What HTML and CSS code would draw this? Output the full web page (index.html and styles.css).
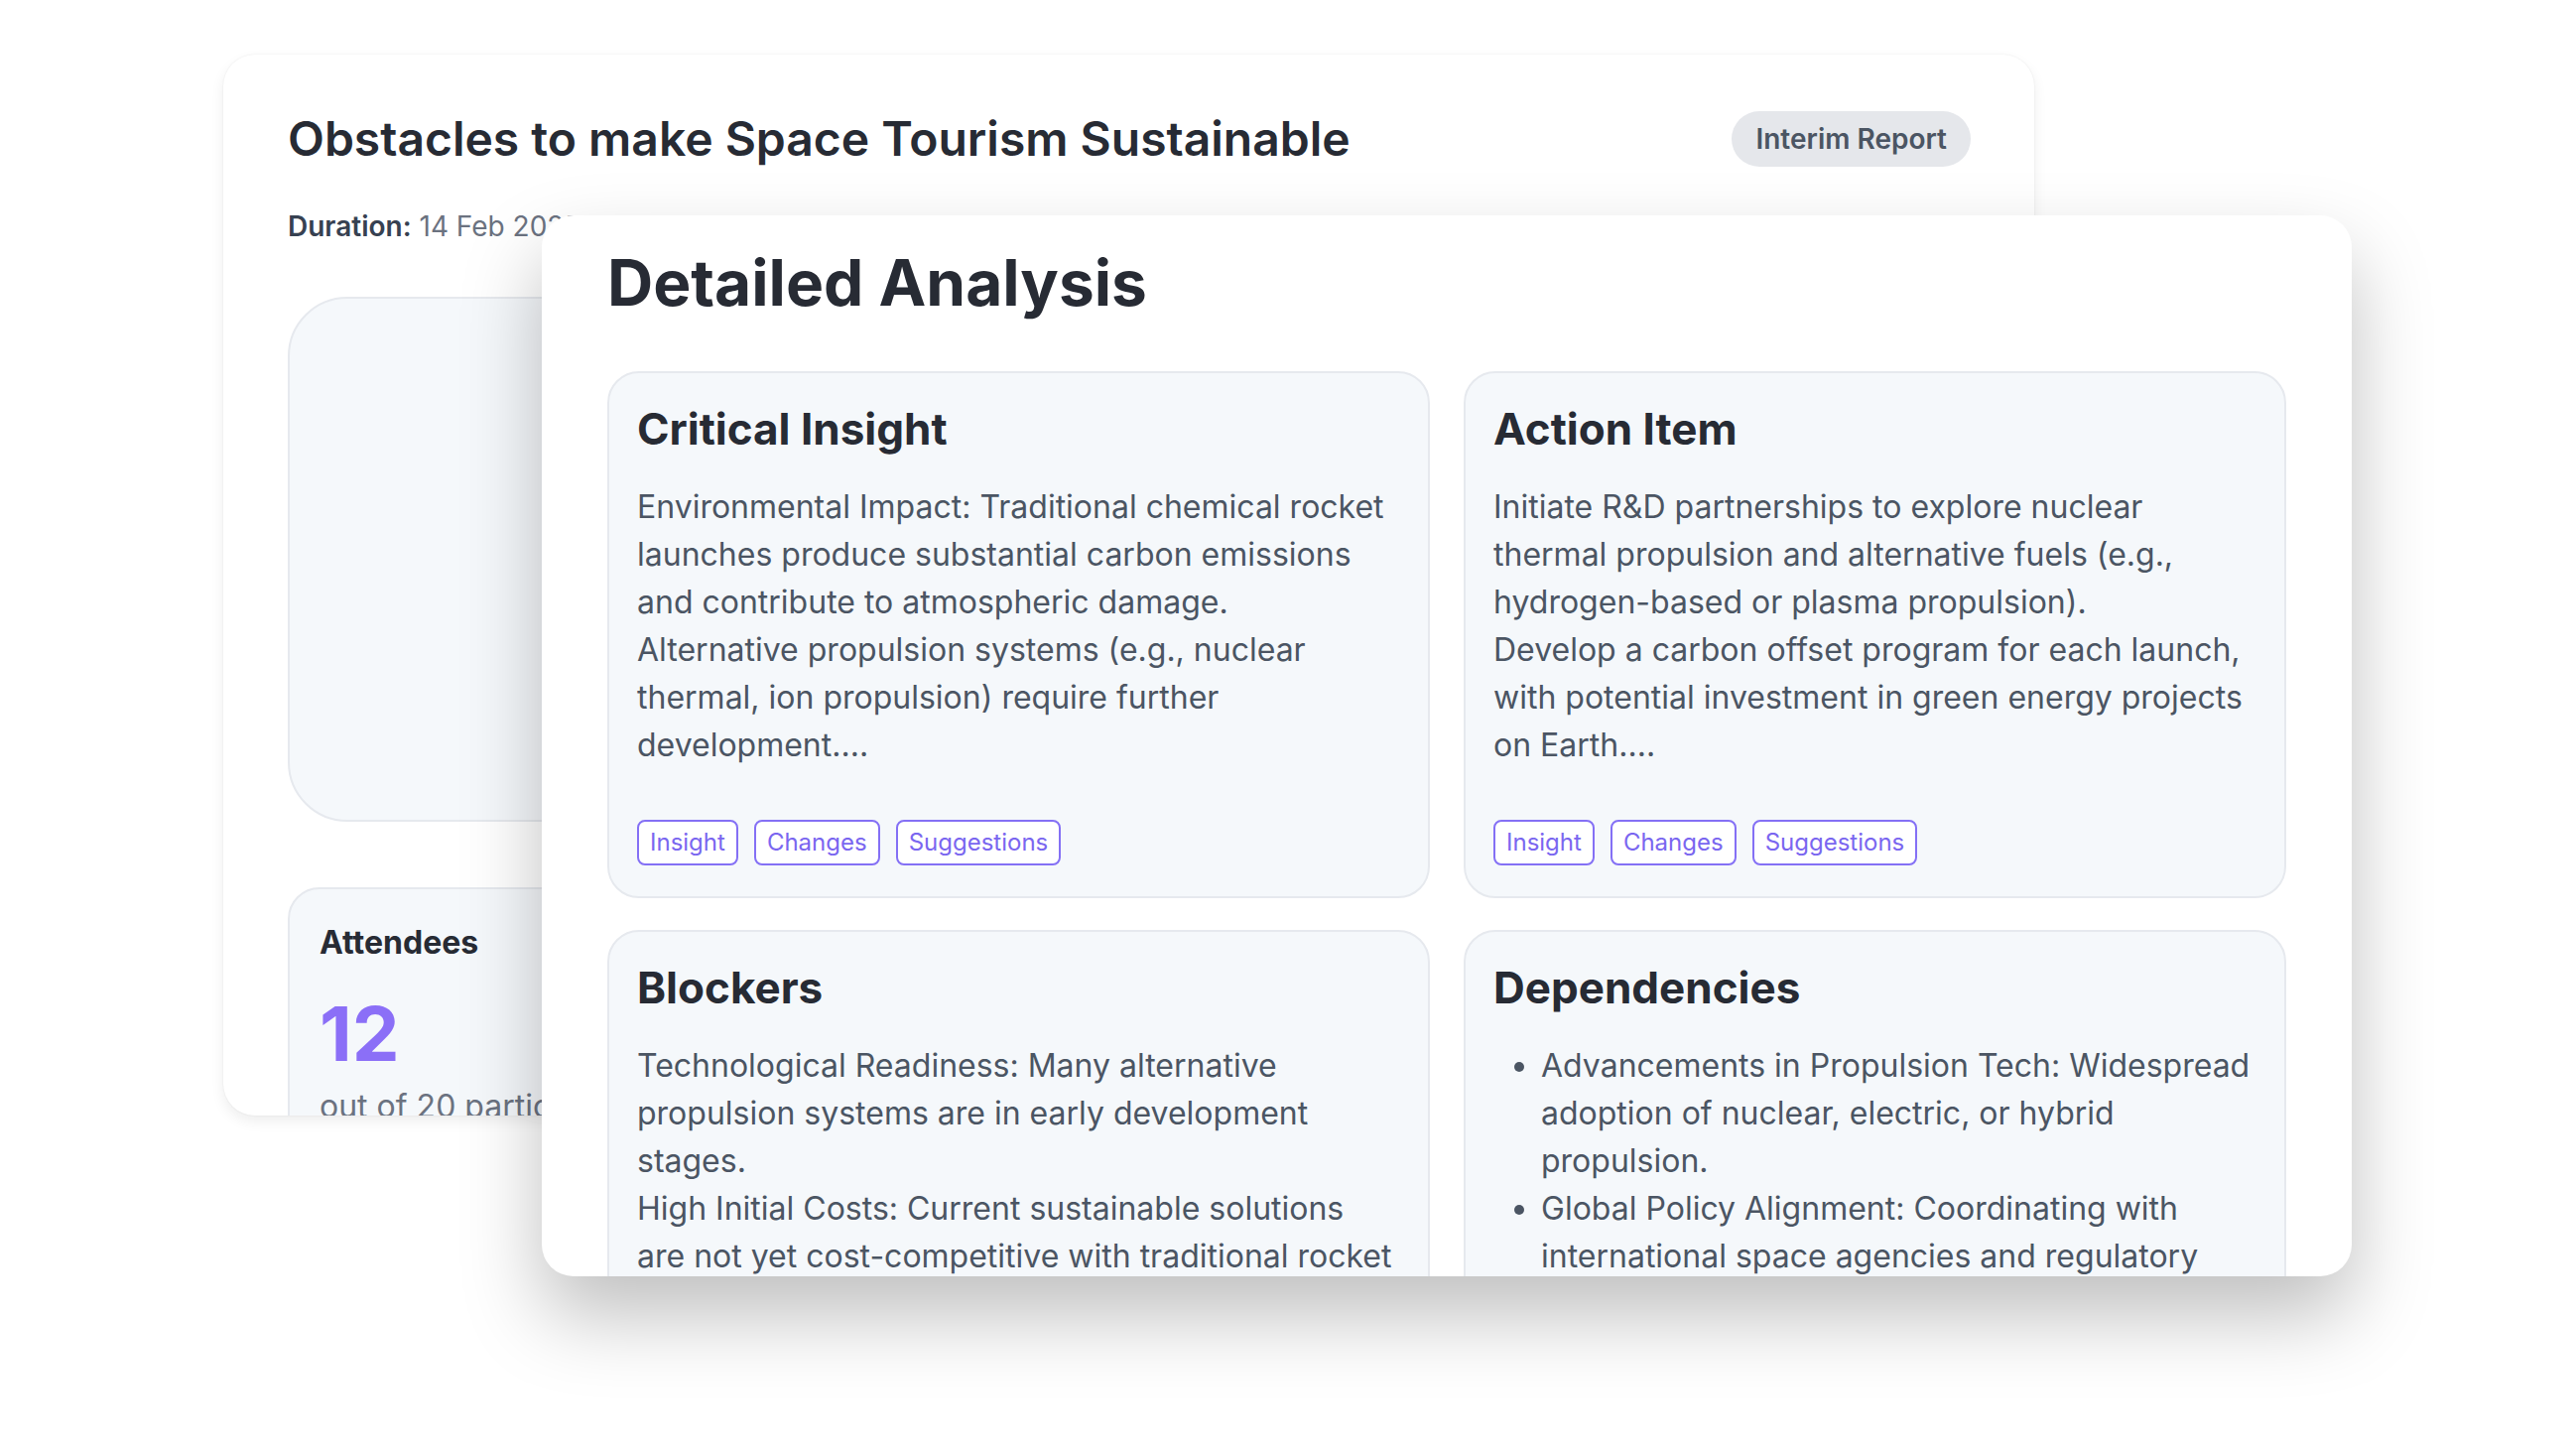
FILE: index.html
```html
<!DOCTYPE html>
<html lang="en">
<head>
<meta charset="utf-8">
<title>Obstacles to make Space Tourism Sustainable</title>
<link rel="stylesheet" href="styles.css">
</head>
<body>
<div class="stage">
  <section class="report">
    <header class="report-head">
      <h1 class="report-title">Obstacles to make Space Tourism Sustainable</h1>
      <span class="badge">Interim Report</span>
    </header>
    <p class="duration"><strong>Duration:</strong> 14 Feb 2025, 10:00 PM - 18 Feb 2025, 10:00 PM</p>
    <div class="chart-box"></div>
    <div class="stats">
      <div class="stat">
        <h3 class="stat-label">Attendees</h3>
        <div class="stat-value">12</div>
        <p class="stat-note">out of 20 participants</p>
      </div>
      <div class="stat">
        <h3 class="stat-label">Topics</h3>
        <div class="stat-value">8</div>
        <p class="stat-note">discussed in total</p>
      </div>
      <div class="stat">
        <h3 class="stat-label">Decisions</h3>
        <div class="stat-value">5</div>
        <p class="stat-note">approved</p>
      </div>
    </div>
  </section>

  <section class="analysis">
    <h2 class="analysis-title">Detailed Analysis</h2>
    <div class="analysis-grid">
      <article class="panel">
        <h3 class="panel-title">Critical Insight</h3>
        <p class="panel-text">Environmental Impact: Traditional chemical rocket launches produce substantial carbon emissions and contribute to atmospheric damage.<br>Alternative propulsion systems (e.g., nuclear thermal, ion propulsion) require further development....</p>
        <div class="tags"><span class="tag">Insight</span><span class="tag">Changes</span><span class="tag">Suggestions</span></div>
      </article>
      <article class="panel">
        <h3 class="panel-title">Action Item</h3>
        <p class="panel-text">Initiate R&amp;D partnerships to explore nuclear thermal propulsion and alternative fuels (e.g., hydrogen-based or plasma propulsion).<br>Develop a carbon offset program for each launch, with potential investment in green energy projects on Earth....</p>
        <div class="tags"><span class="tag">Insight</span><span class="tag">Changes</span><span class="tag">Suggestions</span></div>
      </article>
      <article class="panel">
        <h3 class="panel-title">Blockers</h3>
        <p class="panel-text">Technological Readiness: Many alternative propulsion systems are in early development stages.<br>High Initial Costs: Current sustainable solutions are not yet cost-competitive with traditional rocket fuels....</p>
        <div class="tags"><span class="tag">Insight</span><span class="tag">Changes</span><span class="tag">Suggestions</span></div>
      </article>
      <article class="panel">
        <h3 class="panel-title">Dependencies</h3>
        <ul class="panel-list">
          <li>Advancements in Propulsion Tech: Widespread adoption of nuclear, electric, or hybrid propulsion.</li>
          <li>Global Policy Alignment: Coordinating with international space agencies and regulatory bodies....</li>
        </ul>
        <div class="tags"><span class="tag">Insight</span><span class="tag">Changes</span><span class="tag">Suggestions</span></div>
      </article>
    </div>
  </section>
</div>
</body>
</html>
```

FILE: styles.css
```css
* {
  box-sizing: border-box;
}

html,
body {
  margin: 0;
  padding: 0;
  background: #ffffff;
}

body {
  width: 2596px;
  height: 1460px;
  overflow: hidden;
  font-family: Inter, "Noto Sans", "Liberation Sans", sans-serif;
  color: #272b34;
}

.stage {
  position: relative;
  height: 1460px;
  padding: 55px 0 0 225px;
}

/* ---------- back card ---------- */
.report {
  width: 1825px;
  height: 1069px;
  background: #ffffff;
  border-radius: 32px;
  padding: 57px 64px 0 65px;
  overflow: hidden;
  box-shadow: 0 6px 14px rgba(0, 0, 0, 0.07), 0 0 2px rgba(0, 0, 0, 0.08);
}

.report-head {
  display: flex;
  justify-content: space-between;
  align-items: center;
  height: 56px;
}

.report-title {
  margin: 0;
  font-size: 48px;
  line-height: 56px;
  font-weight: 600;
  color: #272b34;
}

.badge {
  height: 56px;
  padding: 8px 24px;
  border-radius: 999px;
  background: #e5e7eb;
  color: #4b5563;
  font-size: 28px;
  line-height: 40px;
  font-weight: 600;
}

.duration {
  margin: 40px 0 0;
  font-size: 28px;
  line-height: 40px;
  color: #6b7280;
}

.duration strong {
  color: #374151;
  font-weight: 600;
}

.chart-box {
  margin-top: 51px;
  height: 529px;
  border-radius: 60px;
  background: #f5f8fb;
  border: 2px solid #e6e9ee;
}

.stats {
  margin-top: 66px;
  display: grid;
  grid-template-columns: repeat(3, 1fr);
  gap: 32px;
}

.stat {
  height: 320px;
  border-radius: 32px;
  background: #f5f8fb;
  border: 2px solid #e6e9ee;
  padding: 30px;
}

.stat-label {
  margin: 0;
  font-size: 32px;
  line-height: 48px;
  font-weight: 700;
  color: #272b34;
}

.stat-value {
  margin-top: 27px;
  font-size: 76px;
  line-height: 80px;
  font-weight: 700;
  color: #8b6ff7;
}

.stat-note {
  margin: 10px 0 0;
  font-size: 32px;
  line-height: 48px;
  color: #6b7280;
}

/* ---------- front card ---------- */
.analysis {
  position: absolute;
  left: 546px;
  top: 217px;
  width: 1824px;
  height: 1069px;
  background: #ffffff;
  border-radius: 32px;
  padding: 32px 66px 0;
  overflow: hidden;
  box-shadow: 0 40px 80px rgba(0, 0, 0, 0.25);
}

.analysis-title {
  margin: 0 0 53px;
  font-size: 64px;
  line-height: 72px;
  font-weight: 700;
  color: #272b34;
}

.analysis-grid {
  display: grid;
  grid-template-columns: 1fr 1fr;
  column-gap: 34px;
  row-gap: 32px;
}

.panel {
  background: #f5f8fb;
  border: 2px solid #e6e9ee;
  border-radius: 32px;
  padding: 28px 30px 31px 28px;
}

.panel-title {
  margin: 0;
  font-size: 44px;
  line-height: 56px;
  font-weight: 700;
  color: #272b34;
}

.panel-text {
  margin: 27px 0 0;
  font-size: 32px;
  line-height: 48px;
  color: #4b5563;
}

.panel-list {
  margin: 27px 0 0;
  padding-left: 48px;
  font-size: 32px;
  line-height: 48px;
  color: #4b5563;
}

.tags {
  display: flex;
  gap: 16px;
  margin-top: 51px;
}

.tag {
  border: 2px solid #8470f5;
  border-radius: 8px;
  padding: 5px 11px;
  font-size: 24px;
  line-height: 32px;
  color: #7a66f0;
  background: #ffffff;
}
```
